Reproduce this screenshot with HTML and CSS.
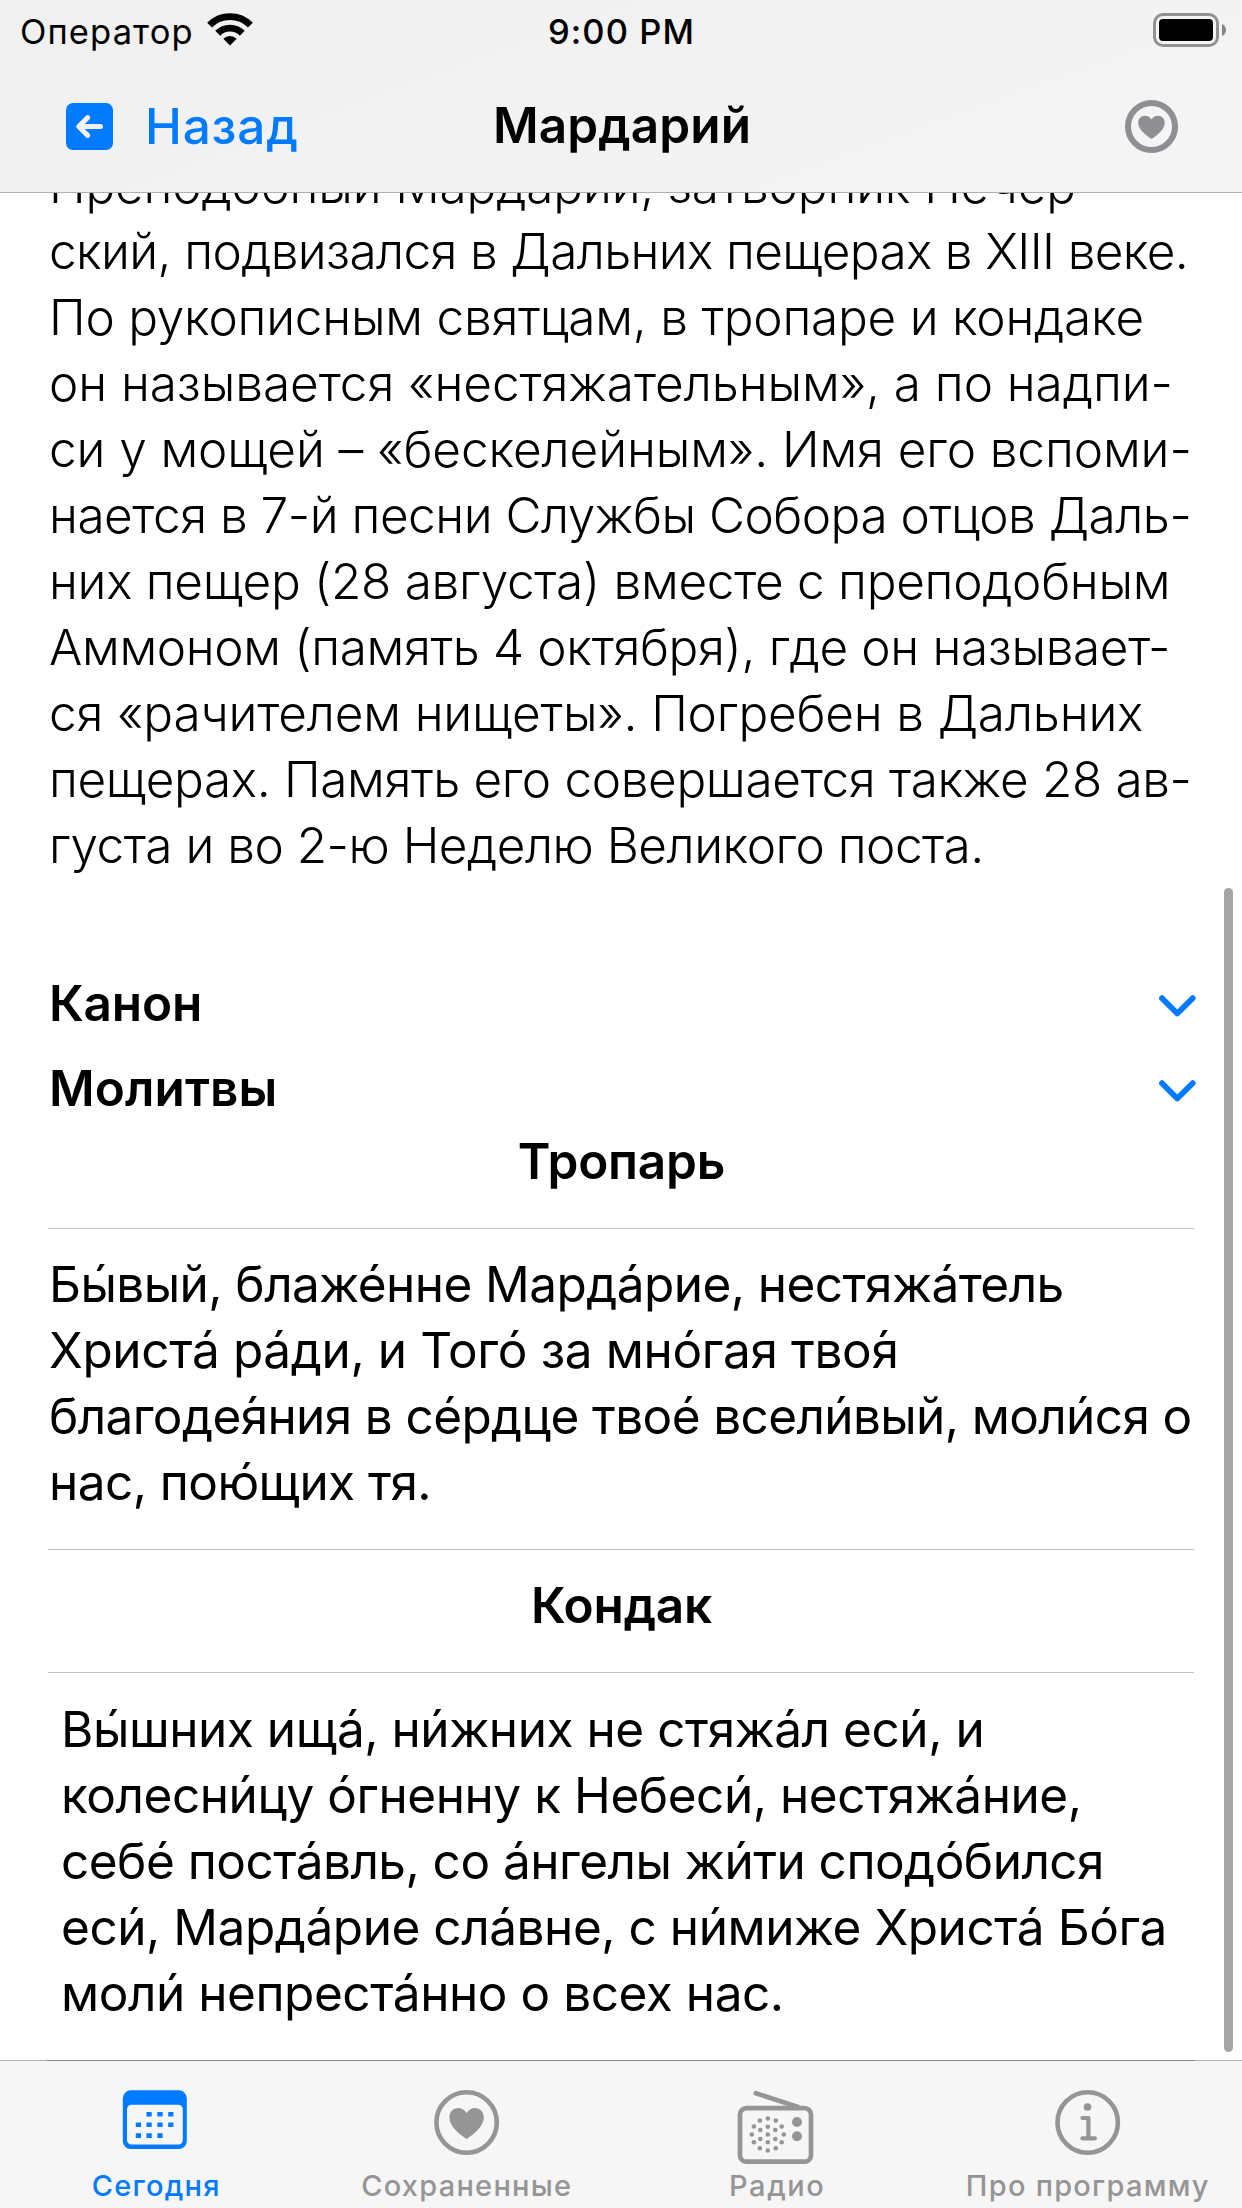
FILE: index.html
```
<!DOCTYPE html>
<html lang="ru">
<head>
<meta charset="utf-8">
<title>Мардарий</title>
<link rel="stylesheet" href="styles.css">
</head>
<body>
<div class="screen">
  <header class="header">
    <div class="status">
      <div class="carrier">
        <span>Оператор</span>
        <svg class="wifi" width="50" height="36" viewBox="0 0 50 36" fill="none" stroke="#000" stroke-width="6.9">
          <path d="M4.6 14.1a28.8 28.8 0 0 1 40.8 0"/>
          <path d="M12.7 22.2a17.4 17.4 0 0 1 24.6 0"/>
          <path d="M25 34.5l-6.7-6.7a9.5 9.5 0 0 1 13.4 0z" fill="#000" stroke="none"/>
        </svg>
      </div>
      <span class="time">9:00 PM</span>
      <svg class="battery" width="74" height="34" viewBox="0 0 74 34">
        <rect x="1.5" y="1.5" width="63" height="31" rx="8.5" fill="none" stroke="#919191" stroke-width="3"/>
        <rect x="6" y="6" width="54" height="22" rx="4" fill="#000"/>
        <path d="M69 11c5.300 2 5.300 10 0 12z" fill="#858585"/>
      </svg>
    </div>
    <nav class="nav">
      <a class="back">
        <svg width="47" height="47" viewBox="0 0 47 47">
          <rect width="47" height="47" rx="7" fill="#007aff"/>
          <path d="M34.500 23.500H13M21.700 14.600L12.700 23.500l9 8.900" fill="none" stroke="#f1f1f1" stroke-width="5" stroke-linecap="round" stroke-linejoin="round"/>
        </svg>
        <span>Назад</span>
      </a>
      <h1 class="title">Мардарий</h1>
      <svg class="favorite" width="53" height="53" viewBox="0 0 53 53">
        <circle cx="26.500" cy="26.500" r="23.500" fill="none" stroke="#8e8e93" stroke-width="6"/>
        <path d="M26.500 39C21 35.500 13.200 29.500 13.200 22.800c0-4 2.900-7.100 6.700-7.100 3 0 5.300 1.500 6.600 3.900 1.300-2.400 3.600-3.900 6.600-3.900 3.800 0 6.700 3.100 6.700 7.100C39.800 29.500 32 35.500 26.500 39z" fill="#8e8e93"/>
      </svg>
    </nav>
  </header>

  <main class="content">
    <div class="life">
      <div>Преподобный Мардарий, затворник Печер</div>
      <div>ский, подвизался в Дальних пещерах в XIII веке.</div>
      <div>По рукописным святцам, в тропаре и кондаке</div>
      <div>он называется «нестяжательным», а по надпи-</div>
      <div>си у мощей – «бескелейным». Имя его вспоми-</div>
      <div>нается в 7-й песни Службы Собора отцов Даль-</div>
      <div>них пещер (28 августа) вместе с преподобным</div>
      <div>Аммоном (память 4 октября), где он называет-</div>
      <div>ся «рачителем нищеты». Погребен в Дальних</div>
      <div>пещерах. Память его совершается также 28 ав-</div>
      <div>густа и во 2-ю Неделю Великого поста.</div>
    </div>

    <div class="row"><span>Канон</span>
      <svg class="chevron" width="38" height="24" viewBox="0 0 38 24"><path d="M4 4.200L19.300 19.500 34.700 4.200"/></svg>
    </div>
    <div class="row row-prayers"><span>Молитвы</span>
      <svg class="chevron" width="38" height="24" viewBox="0 0 38 24"><path d="M4 4.200L19.300 19.500 34.700 4.200"/></svg>
    </div>

    <h2 class="heading">Тропарь</h2>
    <div class="prayer troparion">
      <div>Бы́вый, блаже́нне Марда́рие, нестяжа́тель</div>
      <div>Христа́ ра́ди, и Того́ за мно́гая твоя<span class="acute">´</span></div>
      <div>благодея<span class="acute">´</span>ния в се́рдце твое́ всели́вый, моли́ся о</div>
      <div>нас, пою́щих тя.</div>
    </div>
    <h2 class="heading heading-next">Кондак</h2>
    <div class="prayer kontakion">
      <div>Вы́шних ища́, ни́жних не стяжа́л еси́, и</div>
      <div>колесни́цу о́гненну к Небеси́, нестяжа́ние,</div>
      <div>себе́ поста́вль, со а́нгелы жи́ти сподо́бился</div>
      <div>еси́, Марда́рие сла́вне, с ни́миже Христа́ Бо́га</div>
      <div>моли́ непреста́нно о всех нас.</div>
    </div>
    <div class="scrollbar"></div>
  </main>

  <footer class="tabs">
    <a class="tab active">
      <svg width="80" height="80" viewBox="0 0 80 80" fill="currentColor">
        <path fill-rule="evenodd" d="M15.800 2.300h48a8 8 0 0 1 8 8V53a8 8 0 0 1-8 8h-48a8 8 0 0 1-8-8V10.300a8 8 0 0 1 8-8zM16.500 16.700a4.500 4.500 0 0 0-4.500 4.500V52a4.500 4.500 0 0 0 4.500 4.500h46.800a4.500 4.500 0 0 0 4.500-4.500V21.200a4.500 4.500 0 0 0-4.500-4.500z"/>
        <path d="M31.500 24h5.200v4.600h-5.200zM42.400 24h5.200v4.600h-5.200zM53.200 24h5.200v4.600h-5.200zM20.800 34.400h5.200V39h-5.200zM31.500 34.400h5.200V39h-5.200zM42.400 34.400h5.200V39h-5.200zM53.200 34.400h5.200V39h-5.200zM20.800 45.300h5.200v4.600h-5.200zM31.500 45.300h5.200v4.600h-5.200zM42.400 45.300h5.200v4.600h-5.200z"/>
      </svg>
      <span>Сегодня</span>
    </a>
    <a class="tab">
      <svg width="80" height="80" viewBox="0 0 80 80">
        <circle cx="40.600" cy="34.500" r="30.200" fill="none" stroke="currentColor" stroke-width="4.600"/>
        <path d="M40.600 51C33.500 46.500 23.400 38.500 23.400 29.600c0-5.400 3.800-9.500 8.700-9.500 3.800 0 6.800 2 8.500 5.200 1.700-3.200 4.700-5.200 8.500-5.200 4.900 0 8.700 4.100 8.700 9.500C57.800 38.500 47.700 46.500 40.600 51z" fill="currentColor"/>
      </svg>
      <span>Сохраненные</span>
    </a>
    <a class="tab tab-radio">
      <svg width="80" height="80" viewBox="0 0 80 80" fill="currentColor">
        <rect x="4" y="20.100" width="71" height="53.600" rx="6.500" fill="none" stroke="currentColor" stroke-width="4.700"/>
        <path d="M19.800 5.200L62 19" fill="none" stroke="currentColor" stroke-width="4.700" stroke-linecap="round"/>
        <circle cx="61" cy="34" r="5"/><circle cx="61" cy="48.300" r="5"/>
        <g>
          <circle cx="31.800" cy="46.500" r="2.300"/>
          <circle cx="31.800" cy="38.800" r="2.300"/><circle cx="39.300" cy="42" r="2.300"/><circle cx="39.300" cy="51" r="2.300"/><circle cx="31.800" cy="54.200" r="2.300"/><circle cx="24.300" cy="51" r="2.300"/><circle cx="24.300" cy="42" r="2.300"/>
          <circle cx="31.800" cy="30.500" r="2.300"/><circle cx="39.800" cy="32.600" r="2.300"/><circle cx="45.700" cy="38.500" r="2.300"/><circle cx="47.800" cy="46.500" r="2.300"/><circle cx="45.700" cy="54.200" r="2.300"/><circle cx="39.800" cy="60.200" r="2.300"/><circle cx="31.800" cy="62.500" r="2.300"/><circle cx="23.800" cy="60.200" r="2.300"/><circle cx="17.900" cy="54.200" r="2.300"/><circle cx="15.800" cy="46.500" r="2.300"/><circle cx="17.900" cy="38.500" r="2.300"/><circle cx="23.800" cy="32.600" r="2.300"/>
        </g>
      </svg>
      <span>Радио</span>
    </a>
    <a class="tab">
      <svg width="80" height="80" viewBox="0 0 80 80" fill="none" stroke="currentColor" stroke-width="4.200" stroke-linecap="round" stroke-linejoin="round">
        <circle cx="40.700" cy="34.500" r="30.200" stroke-width="4.600"/>
        <circle cx="40.500" cy="19" r="3.800" fill="currentColor" stroke="none"/>
        <path d="M35.400 30h6v20.300M35.400 50.300h12.500"/>
      </svg>
      <span>Про программу</span>
    </a>
  </footer>
</div>
</body>
</html>
```

FILE: styles.css
```
* { box-sizing: border-box; }
body {
  margin: 0;
  background: #fff;
  color: #000;
  font-family: Inter, "Noto Sans", sans-serif;
}
h1, h2 { margin: 0; font-weight: 600; }
svg { display: block; flex: none; }

.screen {
  width: 1242px;
  height: 2208px;
  display: flex;
  flex-direction: column;
  overflow: hidden;
}

.header {
  flex: none;
  height: 193px;
  border-bottom: 1px solid #b0b0b0;
  background: linear-gradient(160deg, #f0f0f0 0%, #f2f2f2 50%, #f5f5f5 100%);
}
.status {
  height: 60px;
  display: grid;
  grid-template-columns: 1fr auto 1fr;
  padding: 0 15px 0 20px;
  font-size: 34.5px;
  line-height: 63px;
  letter-spacing: 1.1px;
}
.carrier { display: flex; gap: 11px; }
.wifi { margin-top: 11px; }
.time { font-weight: 550; padding-right: 4px; }
.battery { margin-top: 13px; justify-self: end; }

.nav {
  height: 132px;
  display: grid;
  grid-template-columns: 1fr auto 1fr;
  align-items: center;
  padding: 0 64px 0 66px;
  font-size: 49.5px;
  line-height: 132px;
}
.back {
  display: flex;
  align-items: center;
  gap: 32px;
  color: #007aff;
  font-weight: 550;
  letter-spacing: .8px;
}
.title { font-size: inherit; letter-spacing: .1px; line-height: 130px; margin-bottom: 2px; }
.favorite { justify-self: end; }

.content {
  flex: 1;
  min-height: 0;
  overflow: hidden;
  position: relative;
  padding: 0 48px;
  font-size: 49.5px;
  line-height: 66px;
  white-space: nowrap;
}
.life { margin-top: -41px; padding-left: 1px; font-weight: 300; }
.life div:nth-child(1) { letter-spacing: -.17px; }
.life div:nth-child(2) { letter-spacing: -.64px; }
.life div:nth-child(3) { letter-spacing: -.24px; }
.life div:nth-child(4) { letter-spacing: -.07px; }
.life div:nth-child(5) { letter-spacing: -.1px; }
.life div:nth-child(6) { letter-spacing: -.5px; }
.life div:nth-child(7) { letter-spacing: -.3px; }
.life div:nth-child(8) { letter-spacing: -.35px; }
.life div:nth-child(9) { letter-spacing: -.17px; }
.life div:nth-child(10) { letter-spacing: -.35px; }
.life div:nth-child(11) { letter-spacing: -.5px; }

.row {
  display: flex;
  justify-content: space-between;
  align-items: center;
  line-height: 85px;
  padding-left: 1px;
  font-weight: 600;
  letter-spacing: -.2px;
}
.row span { padding-top: 1px; margin-bottom: -1px; }
.life + .row { margin-top: 82px; }
.row-prayers { letter-spacing: .1px; }
.chevron {
  margin-top: 6px;
  margin-right: -2px;
  fill: none;
  stroke: #007aff;
  stroke-width: 5.8;
  stroke-linecap: round;
  stroke-linejoin: round;
}

.heading {
  padding: 4px 0 0 1px;
  font-size: inherit;
  line-height: 54px;
  letter-spacing: -.2px;
  text-align: center;
}
.heading-next { margin-top: 24px; }
.prayer {
  margin-top: 40px;
  padding: 22px 0 34px 1px;
  border-top: 1px solid #c0c0c0;
  border-bottom: 1px solid #c0c0c0;
}
.troparion { letter-spacing: -.56px; }
.troparion div:nth-child(2) { letter-spacing: -.36px; }
.troparion div:nth-child(3) { letter-spacing: -.62px; }
.kontakion { padding: 23px 13px 34px; letter-spacing: -.45px; }
.kontakion div:nth-child(3) { letter-spacing: -.52px; }

.acute {
  display: inline-block;
  width: 0;
  text-indent: -23px;
}

.scrollbar {
  position: absolute;
  top: 695px;
  right: 9px;
  width: 9px;
  height: 1164px;
  border-radius: 5px;
  background: #a5a5a5;
}

.tabs {
  flex: none;
  height: 148px;
  display: grid;
  grid-template-columns: repeat(4, 1fr);
  padding-top: 27px;
  border-top: 1px solid;
  border-image: linear-gradient(90deg, #b0b0b0 48px, #8a8a8a 48px, #8a8a8a 1194px, #b0b0b0 1194px) 1;
  background: #f6f6f6;
  color: #969595;
}
.tab {
  display: flex;
  flex-direction: column;
  align-items: center;
  font-size: 29px;
  line-height: 35px;
  font-weight: 500;
  letter-spacing: 1.25px;
}
.tab span { padding-left: 2px; }
.tab-radio { letter-spacing: 1.6px; }
.active { color: #007aff; }
```
